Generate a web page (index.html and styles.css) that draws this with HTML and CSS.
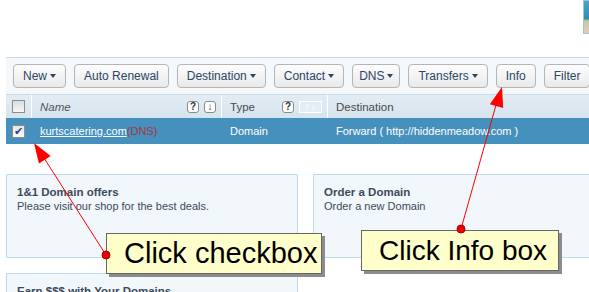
FILE: index.html
```html
<!DOCTYPE html>
<html lang="en">
<head>
  <meta charset="UTF-8">
  <title>Domain Overview</title>
  <link rel="stylesheet" href="styles.css">
</head>
<body>

<div class="top"><div class="thumb"></div></div>

<div class="panel">
  <div class="toolbar">
    <button class="btn">New <i class="caret"></i></button>
    <button class="btn">Auto Renewal</button>
    <button class="btn">Destination <i class="caret"></i></button>
    <button class="btn">Contact <i class="caret"></i></button>
    <button class="btn btn-narrow">DNS <i class="caret"></i></button>
    <button class="btn">Transfers <i class="caret"></i></button>
    <button class="btn">Info</button>
    <button class="btn">Filter</button>
  </div>

  <div class="line head">
    <div class="cell c-check"><span class="box"></span></div>
    <div class="cell c-name"><em>Name</em><span class="tools"><span class="ico">?</span><span class="ico">&#8595;</span></span></div>
    <div class="cell c-type">Type<span class="tools"><span class="ico">?</span><span class="ico off">&#8593;&#8595;</span></span></div>
    <div class="cell c-dest">Destination</div>
  </div>

  <div class="line row sel">
    <div class="cell c-check"><span class="box checked">&#10004;</span></div>
    <div class="cell c-name"><a href="#">kurtscatering.com</a><span class="dns">(DNS)</span></div>
    <div class="cell c-type">Domain</div>
    <div class="cell c-dest">Forward ( http://hiddenmeadow.com )</div>
  </div>
</div>

<div class="offers">
  <div class="offer">
    <div class="offer-title">1&amp;1 Domain offers</div>
    <div class="offer-text">Please visit our shop for the best deals.</div>
  </div>
  <div class="offer">
    <div class="offer-title">Order a Domain</div>
    <div class="offer-text">Order a new Domain</div>
  </div>
  <div class="offer">
    <div class="offer-title">Earn $$$ with Your Domains</div>
  </div>
</div>

<svg class="arrows" width="589" height="292" viewBox="0 0 589 292">
  <line x1="106" y1="255" x2="44" y2="158" stroke="#f00" stroke-width="1"/>
  <polygon points="34,143 50.7,156 38.9,163.6" fill="#f00"/>
  <line x1="461" y1="229" x2="496" y2="105" stroke="#f00" stroke-width="1"/>
  <polygon points="502,87 503.2,108.1 489.8,104.3" fill="#f00"/>
</svg>

<div class="callout callout-check">Click checkbox</div>
<div class="callout callout-info">Click Info box</div>

<svg class="dots" width="589" height="292" viewBox="0 0 589 292">
  <circle cx="106" cy="255" r="4" fill="#e00" stroke="#a00" stroke-width="1"/>
  <circle cx="461" cy="229" r="4" fill="#e00" stroke="#a00" stroke-width="1"/>
</svg>

</body>
</html>
```

FILE: styles.css
```css
body {
  margin: 0;
  background: #fff;
  font-family: 'Liberation Sans', Arial, sans-serif;
  font-size: 11px;
  position: relative;
  width: 589px;
  height: 292px;
  overflow: hidden;
}

.top {
  height: 57px;
  display: flex;
  justify-content: flex-end;
}

.thumb {
  width: 5px;
  height: 32px;
  border: 1px solid #9fbfd8;
  border-right: none;
  background: linear-gradient(#4aa6c8 0%, #2f8db4 55%, #cbc5a2 62%, #d8d2b0 100%);
}

.panel {
  margin-left: 6px;
  border-top: 1px solid #c6dbec;
}

.toolbar {
  height: 36px;
  background: #f5f8fb;
  border-bottom: 1px solid #c9dbe9;
  display: flex;
  align-items: center;
  gap: 8px;
  padding-left: 7px;
  white-space: nowrap;
}

.btn {
  height: 24px;
  padding: 0 9px;
  font-family: inherit;
  font-size: 12px;
  color: #2d4664;
  background: linear-gradient(#fdfdfd, #e9e9e9);
  border: 1px solid #b5b5b5;
  border-radius: 4px;
  flex-shrink: 0;
  display: flex;
  align-items: center;
  gap: 3px;
}

.btn-narrow {
  padding: 0 6px;
}

.caret {
  width: 0;
  height: 0;
  border-left: 3px solid transparent;
  border-right: 3px solid transparent;
  border-top: 4px solid #2d4664;
}

.line {
  display: grid;
  grid-template-columns: 26px 190px 106px 1fr;
}

.head {
  height: 23px;
  background: linear-gradient(#e2ecf4, #d6e4ef);
  color: #4a4a4a;
  font-size: 11.5px;
}

.head .cell {
  border-right: 1px solid #fff;
}

.head .c-dest {
  border-right: none;
}

.cell {
  display: flex;
  align-items: center;
  padding-left: 8px;
  white-space: nowrap;
}

.c-check {
  padding-left: 6px;
}

.head em {
  color: #555;
}

.tools {
  margin-left: auto;
  margin-right: 5px;
  display: flex;
  gap: 5px;
}

.ico {
  width: 10px;
  height: 10px;
  border: 1px solid #8a8a8a;
  border-radius: 3px;
  background: #fff;
  color: #333;
  font-size: 10px;
  font-weight: bold;
  line-height: 10px;
  text-align: center;
}

.ico.off {
  width: 21px;
  border-color: #fff;
  border-radius: 0;
  background: #e4edf5;
  color: #fff;
  letter-spacing: 1px;
}

.box {
  width: 11px;
  height: 11px;
  border: 1px solid #8d8d8d;
  background: linear-gradient(#dcdcdc, #f6f6f6);
  font-size: 11px;
  line-height: 11px;
  text-align: center;
  color: #2a3f9a;
}

.box.checked {
  background: linear-gradient(#e6e6e6, #fafafa);
}

.row {
  height: 26px;
  font-size: 11px;
}

.sel {
  background: #4690be;
  color: #fff;
}

.sel a {
  color: #fff;
}

.dns {
  color: #a8323f;
}

.offers {
  margin: 30px 0 0 6px;
  display: grid;
  grid-template-columns: 292px 1fr;
  column-gap: 15px;
  row-gap: 15px;
}

.offer {
  height: 62px;
  padding: 10px 10px;
  background: #f2f7fb;
  border: 1px solid #bed7ea;
  color: #3e4a5a;
}

.offer:nth-child(2) {
  border-right: none;
}

.offer-title {
  font-size: 11.5px;
  font-weight: bold;
  line-height: 14px;
}

.offer-text {
  line-height: 14px;
}

.arrows,
.dots {
  position: absolute;
  left: 0;
  top: 0;
  pointer-events: none;
}

.callout {
  position: absolute;
  height: 41px;
  box-sizing: border-box;
  background: #ffffcc;
  border: 1px solid #666;
  box-shadow: 3px 3px 0 #8c8c8c;
  color: #000;
  font-family: 'Liberation Sans', Arial, sans-serif;
  font-size: 29px;
  line-height: 39px;
  padding-left: 17px;
  white-space: nowrap;
}

.callout-check {
  left: 106px;
  top: 233px;
  width: 216px;
}

.callout-info {
  left: 361px;
  top: 230px;
  width: 198px;
  font-size: 28px;
}
```
